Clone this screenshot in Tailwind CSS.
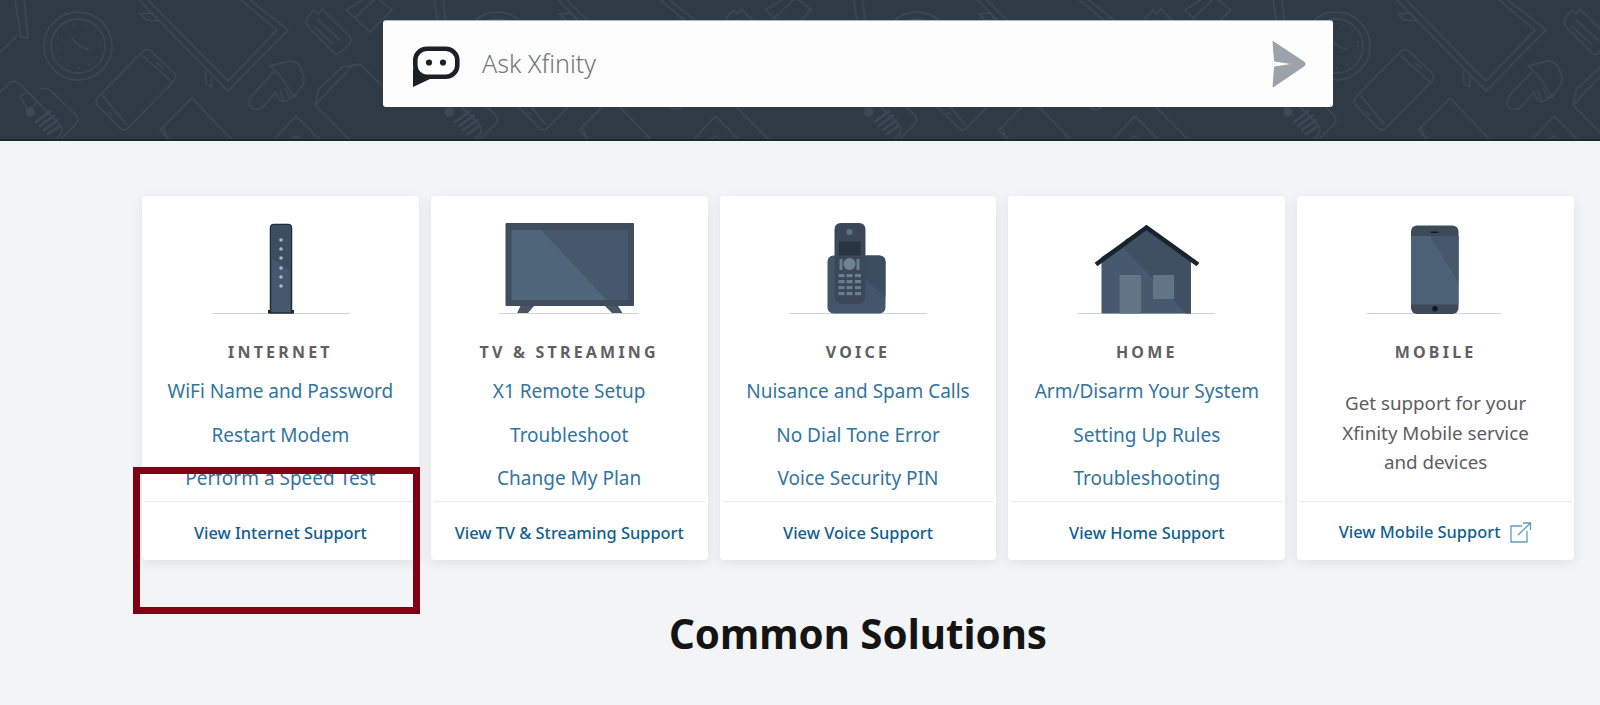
<!DOCTYPE html>
<html lang="en">
<head>
    <meta charset="UTF-8">
    <meta name="viewport" content="width=device-width, initial-scale=1.0">
    <title>Xfinity Support</title>
    <script src="https://cdn.jsdelivr.net/npm/@tailwindcss/browser@4"></script>
</head>
<body class="bg-[#f3f4f6] font-['Noto_Sans',sans-serif] h-[705px] overflow-hidden">
    <!-- Search header -->
    <header class="relative h-[141px] bg-[#303a47] border-b-2 border-[#1e2833] overflow-hidden">
        <svg class="absolute inset-0 w-full h-full" xmlns="http://www.w3.org/2000/svg">
            <defs>
                <pattern id="devices" patternUnits="userSpaceOnUse" width="419.33" height="140">
                    <g fill="none" stroke="#3d4856" stroke-width="1.3" stroke-linejoin="round" stroke-linecap="round">
                        <!-- bar -->
                        <path d="M15 0L21 37L28 38L24 0M18 35L0 52"/>
                        <!-- clock -->
                        <circle cx="78" cy="46" r="34"/>
                        <circle cx="78" cy="46" r="27"/>
                        <circle cx="78" cy="46" r="22" stroke-dasharray="1 10"/>
                        <path d="M72 38Q76 46 88 49"/>
                        <!-- tablet -->
                        <path d="M139 0L228 91L288 30L250 0"/>
                        <path d="M148 0L228 81L277 30L241 0"/>
                        <path d="M140 14L146 20L158 21L152 13ZM205 71L206 84L212 87L211 77"/>
                        <!-- phone -->
                        <path d="M142 52Q147 47 152 52L174 73Q177 77 174 81L128 128Q124 132 120 128L98 106Q94 100 98 97Z"/>
                        <path d="M143 56L172 82M103 96L126 124"/>
                        <path d="M157 63L163 68M108 112L112 115"/>
                        <!-- cordless phone -->
                        <path d="M10 83Q15 79 20 84L60 125Q64 130 60 135L55 140M0 92L10 83M40 90Q46 86 52 92L76 115Q80 120 76 124L60 140"/>
                        <path d="M20 96L28 92L38 102L28 110Z"/>
                        <circle cx="30" cy="112" r="4" fill="#3d4856"/>
                        <path d="M36 122L52 110M40 126L56 114M44 130L58 120M48 134L60 126" stroke-width="2.5" stroke-dasharray="3 2"/>
                        <!-- brush -->
                        <path d="M270 66L290 61Q296 61 300 66L304 78Q305 84 300 88L294 98L286 84Q280 74 270 66Z"/>
                        <path d="M274 72L252 95Q246 104 252 108Q258 112 264 106L276 92"/>
                        <path d="M276 92Q280 106 288 100L296 94M280 90L284 102M285 88L290 99"/>
                        <!-- note -->
                        <path d="M307 18L314 10L318 14L322 9L350 37Q352 40 350 43L340 53Q337 56 334 53L308 27Q305 22 307 18Z"/>
                        <path d="M318 20L340 40M314 26L333 44"/>
                        <!-- box -->
                        <path d="M346 10L372 -6L392 10L370 32L346 10ZM356 17L378 -4"/>
                        <path d="M315 105L318 90L342 67L360 64L400 104M315 105L352 66M315 105L352 142"/>
                        <!-- lower triangles -->
                        <path d="M160 130L192 98L234 142M160 130L174 144M163 127L168 140"/>
                        <path d="M272 142L296 116L322 142M290 140L296 136L302 140"/>
                    </g>
                </pattern>
            </defs>
            <rect width="100%" height="100%" fill="url(#devices)"/>
        </svg>
        <div class="relative ml-[383px] mt-[20px] w-[950px] h-[87px] bg-[#fdfdfe] rounded-[3px] border-t border-[#aab6c4] flex items-center justify-between">
            <div class="flex items-center">
                <svg class="ml-[29px] mt-[6px]" width="48" height="42" viewBox="0 0 48 42" xmlns="http://www.w3.org/2000/svg">
                    <rect x="3.3" y="2.8" width="42" height="28" rx="11.5" fill="#fff" stroke="#1c2029" stroke-width="4.6"/>
                    <path d="M1 22V41L18 33V30L6 28Z" fill="#1c2029"/>
                    <circle cx="17" cy="16.5" r="3.1" fill="#1c2029"/>
                    <circle cx="31" cy="16.5" r="3.1" fill="#1c2029"/>
                </svg>
                <span class="ml-[22px] mb-[1px] text-[25px] font-light text-[#71767c] leading-none">Ask Xfinity</span>
            </div>
            <svg class="mr-[26px]" width="36" height="48" viewBox="0 0 36 48" xmlns="http://www.w3.org/2000/svg">
                <path d="M2 1.5L33 22Q35.5 24 33 26L2 47L3.5 27L23 24L3.5 21Z" fill="#9aa2aa" stroke="#9aa2aa" stroke-linejoin="round"/>
            </svg>
        </div>
    </header>

    <main class="relative pt-[55px]">
        <!-- Support cards -->
        <div class="ml-[142px] w-[1432px] grid grid-cols-5 gap-[12px]">

            <div class="h-[364px] bg-white rounded-[4px] shadow-[0_3px_12px_rgba(30,40,60,0.09)] flex flex-col text-center">
                <svg class="mx-auto mt-[24px] shrink-0" width="140" height="96" viewBox="210 220 140 96" xmlns="http://www.w3.org/2000/svg">
                    <path d="M212 313.5H350" stroke="#c9d6da" stroke-width="1.2"/>
                    <path d="M270.5 228Q270.5 224.5 274 224.5H288Q291.5 224.5 291.5 228V313H270.5Z" fill="#46586c" stroke="#1e2c3a" stroke-width="1.5"/>
                    <path d="M271 228Q271 225 274 225H288Q291 225 291 228V272L271 258Z" fill="#3e4e61"/>
                    <path d="M268 313.5V310H271V313.5ZM291 313.5V310H294V313.5Z" fill="#1e2c3a"/>
                    <g fill="#a9b8c8">
                        <circle cx="281" cy="240" r="1.8"/>
                        <circle cx="281" cy="249" r="1.8"/>
                        <circle cx="281" cy="258" r="1.8"/>
                        <circle cx="281" cy="268" r="1.8"/>
                        <circle cx="281" cy="277" r="1.8"/>
                        <circle cx="281" cy="286" r="1.8"/>
                    </g>
                </svg>
                <h2 class="mt-[24px] h-[24px] leading-[24px] text-[16px] font-bold tracking-[3.2px] text-[#5f6062]">INTERNET</h2>
                <ul class="mt-[6px] flex-1 text-[19px] leading-[43.5px] text-[#33749e]">
                    <li>WiFi Name and Password</li>
                    <li>Restart Modem</li>
                    <li>Perform a Speed Test</li>
                </ul>
                <a class="mx-[3px] h-[59px] border-t border-[#e9eaec] pt-[5px] flex items-center justify-center text-[16.4px] font-medium text-[#0f5e8f]">View Internet Support</a>
            </div>

            <div class="h-[364px] bg-white rounded-[4px] shadow-[0_3px_12px_rgba(30,40,60,0.09)] flex flex-col text-center">
                <svg class="mx-auto mt-[24px] shrink-0" width="140" height="96" viewBox="499 220 140 96" xmlns="http://www.w3.org/2000/svg">
                    <path d="M499 313.5H639" stroke="#c9d6da" stroke-width="1.2"/>
                    <path d="M520.5 306H534L528 313H517ZM605 306H618L622.5 313H612Z" fill="#4a5563"/>
                    <rect x="505.5" y="223" width="128.5" height="83" rx="1" fill="#3f4d5e"/>
                    <rect x="511.5" y="230" width="116.5" height="70" fill="#4f6579"/>
                    <path d="M541.5 230H628V300H606.5Z" fill="#45586c"/>
                </svg>
                <h2 class="mt-[24px] h-[24px] leading-[24px] text-[16px] font-bold tracking-[3.2px] text-[#5f6062]">TV &amp; STREAMING</h2>
                <ul class="mt-[6px] flex-1 text-[19px] leading-[43.5px] text-[#33749e]">
                    <li>X1 Remote Setup</li>
                    <li>Troubleshoot</li>
                    <li>Change My Plan</li>
                </ul>
                <a class="mx-[3px] h-[59px] border-t border-[#e9eaec] pt-[5px] flex items-center justify-center text-[16.4px] font-medium text-[#0f5e8f]">View TV &amp; Streaming Support</a>
            </div>

            <div class="h-[364px] bg-white rounded-[4px] shadow-[0_3px_12px_rgba(30,40,60,0.09)] flex flex-col text-center">
                <svg class="mx-auto mt-[24px] shrink-0" width="140" height="96" viewBox="788 220 140 96" xmlns="http://www.w3.org/2000/svg">
                    <path d="M789 313.5H927" stroke="#c9d6da" stroke-width="1.2"/>
                    <rect x="827.5" y="255.5" width="58" height="58" rx="6" fill="#435669"/>
                    <path d="M866 255.5H879Q885.5 255.5 885.5 262V297L866 280Z" fill="#3c4d60"/>
                    <path d="M834.5 230Q834.5 223 841 223H859Q865.5 223 865.5 230V295Q865.5 304 857 304H843Q834.5 304 834.5 295Z" fill="#3a4859"/>
                    <circle cx="849.5" cy="232" r="3" fill="#5f7386"/>
                    <rect x="839" y="241.5" width="21.5" height="14" fill="#293442"/>
                    <circle cx="849.5" cy="264" r="6" fill="#6f8294"/>
                    <g fill="#6b7e90">
                        <rect x="839.5" y="259" width="3" height="11"/>
                        <rect x="856.5" y="259" width="3" height="11"/>
                        <rect x="838.5" y="274" width="6" height="3.2"/>
                        <rect x="846.5" y="274" width="6" height="3.2"/>
                        <rect x="855" y="274" width="6" height="3.2"/>
                        <rect x="838.5" y="280" width="6" height="3.2"/>
                        <rect x="846.5" y="280" width="6" height="3.2"/>
                        <rect x="855" y="280" width="6" height="3.2"/>
                        <rect x="838.5" y="286" width="6" height="3.2"/>
                        <rect x="846.5" y="286" width="6" height="3.2"/>
                        <rect x="855" y="286" width="6" height="3.2"/>
                        <rect x="838.5" y="292" width="6" height="3.2"/>
                        <rect x="846.5" y="292" width="6" height="3.2"/>
                        <rect x="855" y="292" width="6" height="3.2"/>
                    </g>
                </svg>
                <h2 class="mt-[24px] h-[24px] leading-[24px] text-[16px] font-bold tracking-[3.2px] text-[#5f6062]">VOICE</h2>
                <ul class="mt-[6px] flex-1 text-[19px] leading-[43.5px] text-[#33749e]">
                    <li>Nuisance and Spam Calls</li>
                    <li>No Dial Tone Error</li>
                    <li>Voice Security PIN</li>
                </ul>
                <a class="mx-[3px] h-[59px] border-t border-[#e9eaec] pt-[5px] flex items-center justify-center text-[16.4px] font-medium text-[#0f5e8f]">View Voice Support</a>
            </div>

            <div class="h-[364px] bg-white rounded-[4px] shadow-[0_3px_12px_rgba(30,40,60,0.09)] flex flex-col text-center">
                <svg class="mx-auto mt-[24px] shrink-0" width="140" height="96" viewBox="1076 220 140 96" xmlns="http://www.w3.org/2000/svg">
                    <path d="M1076.5 313.5H1214" stroke="#c9d6da" stroke-width="1.2"/>
                    <path d="M1100.5 313.5V257L1145.5 228L1190 259V313.5Z" fill="#46596d"/>
                    <path d="M1124 240L1145.5 228L1190 259V313.5H1185L1124 250Z" fill="#3f5063"/>
                    <rect x="1118.5" y="275" width="21.5" height="38.5" fill="#617586"/>
                    <rect x="1152" y="275" width="21" height="24" fill="#617586"/>
                    <path d="M1095 264.5L1145.5 227.5L1197 264.5" fill="none" stroke="#17242f" stroke-width="4.6"/>
                </svg>
                <h2 class="mt-[24px] h-[24px] leading-[24px] text-[16px] font-bold tracking-[3.2px] text-[#5f6062]">HOME</h2>
                <ul class="mt-[6px] flex-1 text-[19px] leading-[43.5px] text-[#33749e]">
                    <li>Arm/Disarm Your System</li>
                    <li>Setting Up Rules</li>
                    <li>Troubleshooting</li>
                </ul>
                <a class="mx-[3px] h-[59px] border-t border-[#e9eaec] pt-[5px] flex items-center justify-center text-[16.4px] font-medium text-[#0f5e8f]">View Home Support</a>
            </div>

            <div class="h-[364px] bg-white rounded-[4px] shadow-[0_3px_12px_rgba(30,40,60,0.09)] flex flex-col text-center">
                <svg class="mx-auto mt-[24px] shrink-0" width="140" height="96" viewBox="1366 220 140 96" xmlns="http://www.w3.org/2000/svg">
                    <path d="M1366.5 313.5H1501.5" stroke="#c9d6da" stroke-width="1.2"/>
                    <rect x="1411" y="225.5" width="47.5" height="88.5" rx="6" fill="#3d4a5a"/>
                    <rect x="1411" y="236" width="47.5" height="68.5" fill="#4c6175"/>
                    <path d="M1430 236H1458.5V282Z" fill="#45576a"/>
                    <rect x="1430.5" y="231.5" width="8" height="1.6" rx="0.8" fill="#111b26"/>
                    <circle cx="1435" cy="308.7" r="2.7" fill="#111b26"/>
                </svg>
                <h2 class="mt-[24px] h-[24px] leading-[24px] text-[16px] font-bold tracking-[3.2px] text-[#5f6062]">MOBILE</h2>
                <p class="mt-[25px] flex-1 text-[18.8px] leading-[29.5px] text-[#5c5d60]">Get support for your<br>Xfinity Mobile service<br>and devices</p>
                <a class="mx-[3px] h-[59px] border-t border-[#e9eaec] pt-[2px] flex items-center justify-center text-[16.4px] font-medium text-[#0f5e8f]">View Mobile Support
                    <svg class="ml-[10px]" width="22" height="21" viewBox="0 0 22 21" xmlns="http://www.w3.org/2000/svg" fill="none" stroke="#5f9cc0" stroke-width="1.3">
                        <path d="M12 4H1V20H17V9M8 13L20.5 1M13 1H20.5V8"/>
                    </svg>
                </a>
            </div>
        </div>

        <h2 class="mt-[48px] ml-[142px] w-[1432px] text-center text-[40.3px] leading-[52px] font-bold text-[#141414]">Common Solutions</h2>

        <!-- Red highlight drawn over the first card -->
        <div class="absolute left-[133px] top-[326px] w-[287px] h-[147px] border-[7px] border-[#7f0015]"></div>
    </main>
</body>
</html>
